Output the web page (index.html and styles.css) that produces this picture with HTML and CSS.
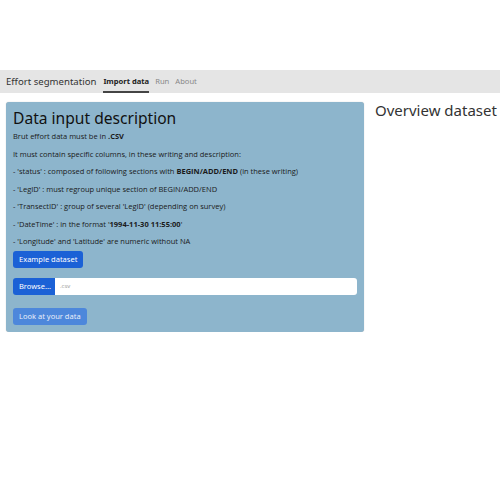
FILE: index.html
```html
<!DOCTYPE html>
<html>
<head>
<meta charset="utf-8">
<link rel="stylesheet" href="styles.css">
</head>
<body>
<div class="top-space"></div>
<nav class="navbar">
  <span class="brand">Effort segmentation</span>
  <a class="nav-link active">Import data</a>
  <a class="nav-link">Run</a>
  <a class="nav-link">About</a>
</nav>
<main class="content">
  <section class="card">
    <h2 class="card-title">Data input description</h2>
    <p>Brut effort data must be in <b>.CSV</b></p>
    <p>It must contain specific columns, in these writing and description:</p>
    <p>- 'status' : composed of following sections with <b>BEGIN/ADD/END</b> (in these writing)</p>
    <p>- 'LegID' : must regroup unique section of BEGIN/ADD/END</p>
    <p>- 'TransectID' : group of several 'LegID' (depending on survey)</p>
    <p>- 'DateTime' : in the format '<b>1994-11-30 11:55:00</b>'</p>
    <p class="last">- 'Longitude' and 'Latitude' are numeric without NA</p>
    <div class="btn-row"><span class="btn">Example dataset</span></div>
    <div class="file-row">
      <span class="btn browse">Browse...</span>
      <span class="file-input">.csv</span>
    </div>
    <div class="btn-row"><span class="btn disabled">Look at your data</span></div>
  </section>
  <section class="overview">
    <h2 class="overview-title">Overview dataset</h2>
  </section>
</main>
</body>
</html>
```
FILE: styles.css
```css
html, body { margin: 0; padding: 0; background: #fff; }
body { font-family: "Open Sans", "Noto Sans", sans-serif; color: #222; }
.top-space { height: 70px; }
.navbar {
  height: 23px; background: #e5e5e5; display: flex; align-items: center;
  padding: 0 6px; box-sizing: border-box;
}
.brand { font-family: "Noto Sans", sans-serif; font-size: 9.6px; color: #333; margin-right: 7px; }
.nav-link { font-family: "Noto Sans", sans-serif; font-size: 7.6px; color: #888; margin-right: 6px; height: 23px; line-height: 20px; padding-top: 1px; box-sizing: border-box; }
.nav-link.active { color: #222; font-weight: 700; border-bottom: 2px solid #444; }
.content { display: flex; padding: 9px 6px 0 6px; gap: 11px; align-items: flex-start; }
.card {
  flex: 0 0 358px; box-sizing: border-box; height: 230px; background: #8db5cc;
  border-radius: 3px; padding: 6px 7px; box-shadow: 0 0 1px rgba(0,0,0,0.3);
}
.card-title { font-family: "Noto Sans", sans-serif; font-weight: 400; font-size: 15.6px; margin: 0 0 4px 0; color: #111; line-height: 20px; }
.card p { font-size: 7.5px; margin: 0 0 9.5px 0; line-height: 8px; color: #1a1a1a; }
.card p.last { margin-bottom: 6px; }
.btn-row { display: flex; margin-bottom: 10px; }
.btn {
  display: inline-block; background: #1b61d6; color: #fff; font-family: "Noto Sans", sans-serif;
  font-size: 7.5px; border-radius: 3px; padding: 0 6px; height: 17px; line-height: 17px;
}
.btn.disabled { background: #4d87db; color: #e8eefa; }
.file-row { display: flex; height: 17px; margin-bottom: 13px; }
.btn.browse { border-radius: 3px 0 0 3px; width: 42px; box-sizing: border-box; }
.file-input { flex: 1; background: #fff; border-radius: 0 3px 3px 0; font-size: 6px; color: #999; line-height: 17px; padding-left: 5px; }
.overview-title { font-family: "Noto Sans", sans-serif; font-weight: 400; font-size: 15px; margin: 0; color: #333; line-height: 16px; white-space: nowrap; }
```
